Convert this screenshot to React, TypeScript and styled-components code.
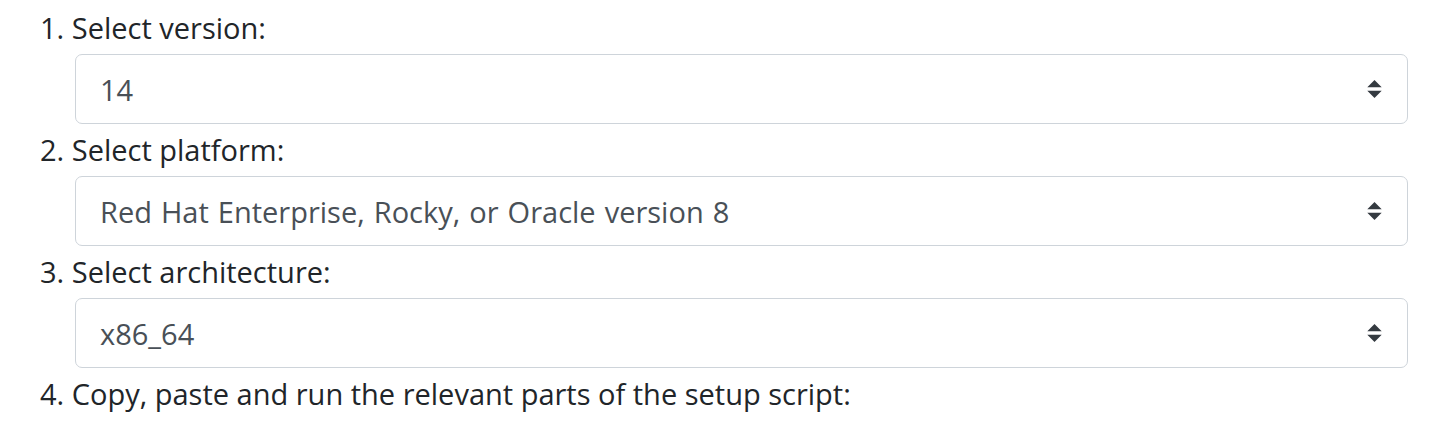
import styled, { createGlobalStyle } from "styled-components";

const Global = createGlobalStyle`
  body {
    margin: 0;
    background: #fff;
    font-family: "Open Sans", "Noto Sans", sans-serif;
    color: #212529;
  }
`;

const Page = styled.div`
  padding: 2px 44px 0 40px;
`;

const Step = styled.div`
  height: 52px;
  line-height: 52px;
  font-size: 29px;
  white-space: nowrap;
`;

const Field = styled.div`
  position: relative;
  margin-left: 35px;
`;

const Select = styled.select`
  display: block;
  width: 100%;
  height: 70px;
  padding: 0 60px 0 24px;
  font-family: inherit;
  font-size: 29px;
  word-spacing: 1.5px;
  color: #495057;
  background: #fff;
  border: 1.5px solid #ced4da;
  border-radius: 7px;
  appearance: none;
  -webkit-appearance: none;
  outline: none;
`;

const Arrow = styled.svg`
  position: absolute;
  right: 26px;
  top: 50%;
  width: 15px;
  height: 18px;
  transform: translateY(-50%);
  pointer-events: none;
`;

function Chooser({ value }: { value: string }) {
  return (
    <Field>
      <Select defaultValue={value}>
        <option>{value}</option>
      </Select>
      <Arrow viewBox="0 0 4 5">
        <path d="M2 0L0 2h4zm0 5L0 3h4z" fill="#343a40" />
      </Arrow>
    </Field>
  );
}

export default function App() {
  return (
    <>
      <Global />
      <Page>
        <Step>1. Select version:</Step>
        <Chooser value="14" />
        <Step>2. Select platform:</Step>
        <Chooser value="Red Hat Enterprise, Rocky, or Oracle version 8" />
        <Step>3. Select architecture:</Step>
        <Chooser value="x86_64" />
        <Step>4. Copy, paste and run the relevant parts of the setup script:</Step>
      </Page>
    </>
  );
}
